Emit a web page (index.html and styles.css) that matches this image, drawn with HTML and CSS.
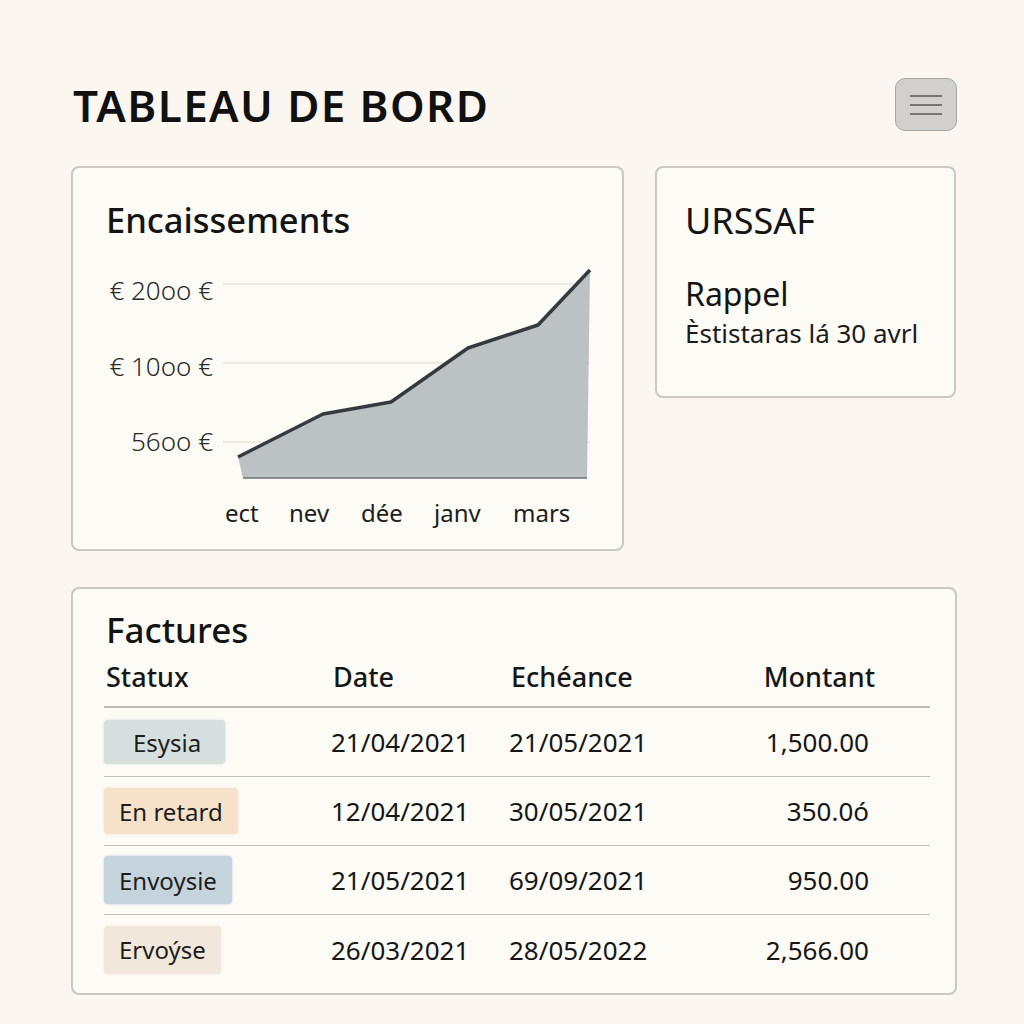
FILE: index.html
```html
<!DOCTYPE html>
<html lang="fr">
<head>
<meta charset="utf-8">
<title>Tableau de bord</title>
<link rel="stylesheet" href="styles.css">
</head>
<body>
<div class="page">
  <header class="header">
    <h1 class="title">TABLEAU DE BORD</h1>
    <button class="menu" aria-label="Menu">
      <span class="menu-line"></span>
      <span class="menu-line"></span>
      <span class="menu-line"></span>
    </button>
  </header>

  <div class="top-row">
    <section class="card card-chart">
      <h2 class="card-title">Encaissements</h2>
      <svg class="chart" width="553" height="285" viewBox="0 0 553 285">
        <g class="grid">
          <line x1="152" y1="29" x2="519" y2="29"/>
          <line x1="152" y1="108" x2="519" y2="108"/>
          <line x1="152" y1="187" x2="519" y2="187"/>
        </g>
        <polygon class="area" points="167,202 252,159 320,147 397,93 467,70 519,15 516,223 172,223"/>
        <polyline class="line" points="167,202 252,159 320,147 397,93 467,70 519,15"/>
        <line class="base" x1="172" y1="223" x2="516" y2="223"/>
        <g class="ylabels">
          <text x="142" y="45" text-anchor="end">€ 20oo €</text>
          <text x="142" y="121" text-anchor="end">€ 10oo €</text>
          <text x="142" y="196" text-anchor="end">56oo €</text>
        </g>
        <g class="xlabels">
          <text x="154" y="267">ect</text>
          <text x="218" y="267">nev</text>
          <text x="290" y="267">dée</text>
          <text x="363" y="267">janv</text>
          <text x="442" y="267">mars</text>
        </g>
      </svg>
    </section>

    <section class="card card-urssaf">
      <h2 class="urssaf-title">URSSAF</h2>
      <p class="rappel">Rappel</p>
      <p class="rappel-text">Èstistaras lá 30 avrl</p>
    </section>
  </div>

  <section class="card card-factures">
    <h2 class="card-title">Factures</h2>
    <div class="table">
      <div class="row head">
        <div class="cell">Statux</div>
        <div class="cell">Date</div>
        <div class="cell">Echéance</div>
        <div class="cell amount head-amount">Montant</div>
      </div>
      <div class="row">
        <div class="cell"><span class="badge badge-paid">Esysia</span></div>
        <div class="cell">21/04/2021</div>
        <div class="cell">21/05/2021</div>
        <div class="cell amount">1,500.00</div>
      </div>
      <div class="row">
        <div class="cell"><span class="badge badge-late">En retard</span></div>
        <div class="cell">12/04/2021</div>
        <div class="cell">30/05/2021</div>
        <div class="cell amount">350.0ó</div>
      </div>
      <div class="row">
        <div class="cell"><span class="badge badge-sent">Envoysie</span></div>
        <div class="cell">21/05/2021</div>
        <div class="cell">69/09/2021</div>
        <div class="cell amount">950.00</div>
      </div>
      <div class="row last">
        <div class="cell"><span class="badge badge-draft">Ervoýse</span></div>
        <div class="cell">26/03/2021</div>
        <div class="cell">28/05/2022</div>
        <div class="cell amount">2,566.00</div>
      </div>
    </div>
  </section>
</div>
</body>
</html>
```

FILE: styles.css
```css
* { box-sizing: border-box; }

html, body {
  margin: 0;
  padding: 0;
  background: #fbf6ef;
}

body {
  font-family: "Noto Sans", "Open Sans", sans-serif;
  color: #161616;
}

.page {
  padding: 78px 67px 0 71px;
}

.header {
  display: flex;
  justify-content: space-between;
  align-items: center;
  height: 53px;
}

.title {
  margin: 0 0 0 2px;
  font-size: 44px;
  font-weight: 600;
  letter-spacing: 1.4px;
  line-height: 1;
  color: #111;
}

.menu {
  width: 62px;
  height: 53px;
  border-radius: 10px;
  border: 1.5px solid #a9a8a4;
  background: #d1d0cc;
  display: flex;
  flex-direction: column;
  justify-content: center;
  align-items: center;
  gap: 7px;
  padding: 0;
}

.menu-line {
  display: block;
  width: 32px;
  height: 2px;
  background: #77767a;
}

.top-row {
  display: flex;
  align-items: flex-start;
  gap: 31px;
  margin-top: 35px;
}

.card {
  background: #fdfbf6;
  border: 2px solid #cbc7c1;
  border-radius: 8px;
}

.card-chart {
  width: 553px;
  height: 385px;
  padding-top: 30px;
}

.card-title {
  margin: 0 0 0 33px;
  font-size: 34.5px;
  font-weight: 500;
  line-height: 44px;
  color: #141414;
}

.chart {
  display: block;
  margin: 13px 0 0 -2px;
  overflow: visible;
}

.grid line {
  stroke: #e9e5de;
  stroke-width: 1.5;
}

.area {
  fill: #bcc1c4;
}

.line {
  fill: none;
  stroke: #353a3f;
  stroke-width: 3.5;
  stroke-linejoin: round;
}

.base {
  stroke: #6d7276;
  stroke-width: 1.5;
}

.ylabels text {
  font-family: "Noto Sans", sans-serif;
  font-size: 26px;
  font-weight: 300;
  fill: #2a2a2a;
}

.xlabels text {
  font-family: "Noto Sans", sans-serif;
  font-size: 24px;
  fill: #1d1d1d;
}

.card-urssaf {
  width: 301px;
  height: 232px;
  padding: 30px 0 0 28px;
}

.urssaf-title {
  margin: 0;
  font-size: 36px;
  font-weight: 400;
  line-height: 46px;
  color: #141414;
}

.rappel {
  margin: 31px 0 0;
  font-size: 32px;
  line-height: 38px;
  color: #141414;
}

.rappel-text {
  margin: 2px 0 0;
  font-size: 26px;
  line-height: 36px;
  color: #1b1b1b;
}

.card-factures {
  margin-top: 36px;
  height: 408px;
  padding: 19px 25px 0 31px;
}

.card-factures .card-title {
  margin-left: 2px;
  font-size: 35px;
}

.table {
  margin-top: -3px;
}

.row {
  display: grid;
  grid-template-columns: 227px 178px 191px 1fr;
  align-items: center;
  height: 69px;
  border-bottom: 1.5px solid #c3c0bb;
  font-size: 26px;
  color: #161616;
}

.row.head {
  height: 59px;
  border-bottom: 2px solid #bebbb6;
  font-weight: 500;
  font-size: 27px;
  padding-left: 2px;
  padding-bottom: 2px;
}

.row.last {
  border-bottom: none;
}

.cell.amount {
  text-align: right;
  padding-right: 61px;
}

.cell.head-amount {
  padding-right: 55px;
}

.badge {
  display: inline-flex;
  align-items: center;
  height: 44px;
  padding: 0 15px;
  border-radius: 4px;
  font-size: 24px;
  color: #1d1d1d;
}

.badge-paid {
  background: #d5dfde;
  box-shadow: 0 0 3px #d5dfde;
  padding: 0 24px 0 29px;
}

.badge-late {
  background: #f5e2c9;
  box-shadow: 0 0 3px #f5e2c9;
  height: 46px;
}

.badge-sent {
  background: #c5d4dc;
  box-shadow: 0 0 3px #c5d4dc;
  height: 48px;
}

.badge-draft {
  background: #f2e7db;
  box-shadow: 0 0 3px #f2e7db;
  height: 48px;
}
```
